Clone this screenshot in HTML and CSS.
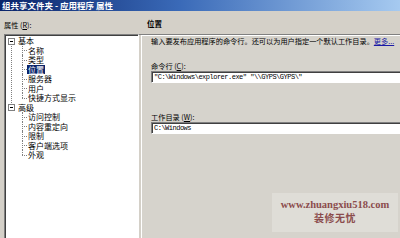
FILE: index.html
```html
<!DOCTYPE html>
<html lang="zh-CN">
<head>
<meta charset="utf-8">
<link rel="stylesheet" href="styles.css">
</head>
<body>
<div class="window">
  <div class="titlebar"><span class="title">组共享文件夹 - 应用程序 属性</span></div>
  <div class="content">
    <div class="left">
      <div class="prop-label">属性 (<u>R</u>):</div>
      <div class="tree">
        <ul class="tree-root">
          <li class="group">
            <div class="row"><span class="toggle"></span><span class="text">基本</span></div>
            <ul class="children">
              <li class="leaf"><span class="text">名称</span></li>
              <li class="leaf"><span class="text">类型</span></li>
              <li class="leaf"><span class="text selected">位置</span></li>
              <li class="leaf"><span class="text">服务器</span></li>
              <li class="leaf"><span class="text">用户</span></li>
              <li class="leaf last"><span class="text">快捷方式显示</span></li>
            </ul>
          </li>
          <li class="group last">
            <div class="row"><span class="toggle"></span><span class="text">高级</span></div>
            <ul class="children">
              <li class="leaf"><span class="text">访问控制</span></li>
              <li class="leaf"><span class="text">内容重定向</span></li>
              <li class="leaf"><span class="text">限制</span></li>
              <li class="leaf"><span class="text">客户端选项</span></li>
              <li class="leaf last"><span class="text">外观</span></li>
            </ul>
          </li>
        </ul>
      </div>
    </div>
    <div class="right">
      <div class="header">位置</div>
      <div class="panel">
        <p class="desc">输入要发布应用程序的命令行。还可以为用户指定一个默认工作目录。<a class="more">更多...</a></p>
        <div class="field first">
          <div class="field-label">命令行 (<u>C</u>):</div>
          <div class="input">"C:\Windows\explorer.exe" "\\GYPS\GYPS\"</div>
        </div>
        <div class="field second">
          <div class="field-label">工作目录 (<u>W</u>):</div>
          <div class="input">C:\Windows</div>
        </div>
      </div>
    </div>
  </div>
  <div class="watermark">
    <div class="wm-url">www.zhuangxiu518.com</div>
    <div class="wm-name">装修无忧</div>
  </div>
</div>
</body>
</html>
```
FILE: styles.css
```css
* { box-sizing: border-box; }
html, body { margin: 0; padding: 0; }
body {
  width: 400px;
  height: 238px;
  overflow: hidden;
  background: #d4d0c8;
  font-family: "Noto Sans CJK SC", "Noto Sans", sans-serif;
  color: #000;
}
.window {
  position: relative;
  width: 400px;
  height: 238px;
  overflow: hidden;
}
.titlebar {
  height: 11px;
  background: linear-gradient(to right, #0a246a 0%, #3a6ab8 45%, #a6caf0 100%);
  color: #fff;
  font-weight: bold;
  font-size: 8.5px;
  line-height: 11px;
  white-space: nowrap;
  overflow: hidden;
}
.title { display: block; padding-left: 2px; }
.content {
  display: flex;
  height: 232px;
}
.left {
  width: 139px;
  flex: none;
  padding-left: 4px;
  display: flex;
  flex-direction: column;
}
.prop-label {
  margin-top: 9px;
  height: 10px;
  line-height: 10px;
  font-size: 7.2px;
  white-space: nowrap;
}
.prop-label u, .field-label u { text-decoration: underline; }
.tree {
  margin-top: 4px;
  flex: 1;
  background: #fff;
  border: 1px solid;
  border-color: #808080 #ffffff #ffffff #808080;
  box-shadow: inset 1px 1px 0 #404040;
  padding: 1px 0 0 1px;
  font-size: 8px;
}
.tree ul { list-style: none; margin: 0; padding: 0; }
.tree .group { position: relative; }
.tree .group:not(.last)::before {
  content: "";
  position: absolute;
  left: 5px;
  top: 4.75px;
  bottom: -4.75px;
  border-left: 1px dotted #808080;
}
.tree .row {
  position: relative;
  height: 9.5px;
  line-height: 9.5px;
  padding-left: 11px;
  white-space: nowrap;
}
.toggle {
  position: absolute;
  left: 2px;
  top: 1.5px;
  width: 7px;
  height: 7px;
  border: 1px solid #808080;
  background: #fff;
  z-index: 1;
}
.toggle::after {
  content: "";
  position: absolute;
  left: 1px;
  top: 2px;
  width: 3px;
  height: 1px;
  background: #000;
}
.tree .leaf {
  position: relative;
  height: 9.5px;
  line-height: 9.5px;
  padding-left: 21px;
  white-space: nowrap;
}
.tree .leaf::before {
  content: "";
  position: absolute;
  left: 16px;
  top: 4.75px;
  width: 5px;
  border-top: 1px dotted #808080;
}
.tree .leaf::after {
  content: "";
  position: absolute;
  left: 16px;
  top: 0;
  bottom: 0;
  border-left: 1px dotted #808080;
}
.tree .leaf.last::after { bottom: auto; height: 5px; }
.tree .text { display: inline-block; padding: 0 1px; line-height: 9.5px; }
.tree .text.selected { background: #0a246a; color: #fff; }

.right {
  flex: 1;
  display: flex;
  flex-direction: column;
  min-width: 0;
}
.header {
  height: 24px;
  flex: none;
  padding: 8px 0 0 8px;
  font-size: 7.5px;
  font-weight: bold;
  line-height: 9px;
  border-bottom: 1px solid #808080;
}
.panel {
  flex: 1;
  margin-left: 2px;
  border-left: 1px solid #ffffff;
  border-top: 1px solid #ffffff;
  padding-left: 9px;
  background: #d6d3cc;
  font-size: 7.2px;
}
.desc {
  margin: 1px 0 0 0;
  line-height: 9px;
  white-space: nowrap;
}
.more { color: #1a1aa6; text-decoration: underline; }
.field-label {
  height: 9px;
  line-height: 9px;
  white-space: nowrap;
}
.field.first { margin-top: 15.5px; }
.field.second { margin-top: 29.5px; }
.input {
  margin-top: 0.5px;
  width: 262px;
  height: 12px;
  background: #fff;
  border: 1px solid;
  border-color: #808080 #ffffff #ffffff #808080;
  box-shadow: inset 1px 1px 0 #404040;
  padding-left: 2px;
  font-family: "Liberation Mono", monospace;
  font-size: 7px;
  letter-spacing: -0.5px;
  line-height: 10px;
  white-space: nowrap;
  overflow: hidden;
}

.watermark {
  position: absolute;
  left: 272px;
  top: 193px;
  width: 126px;
  height: 39px;
  background: rgba(235, 233, 228, 0.45);
  color: #8b4c4c;
  text-align: center;
  padding-top: 6px;
}
.wm-url {
  font-family: "Liberation Serif", serif;
  font-weight: bold;
  font-size: 10.5px;
  line-height: 12px;
  white-space: nowrap;
}
.wm-name {
  font-family: "Noto Sans CJK SC", sans-serif;
  font-weight: bold;
  font-size: 10px;
  letter-spacing: 0.5px;
  line-height: 13px;
}
```
